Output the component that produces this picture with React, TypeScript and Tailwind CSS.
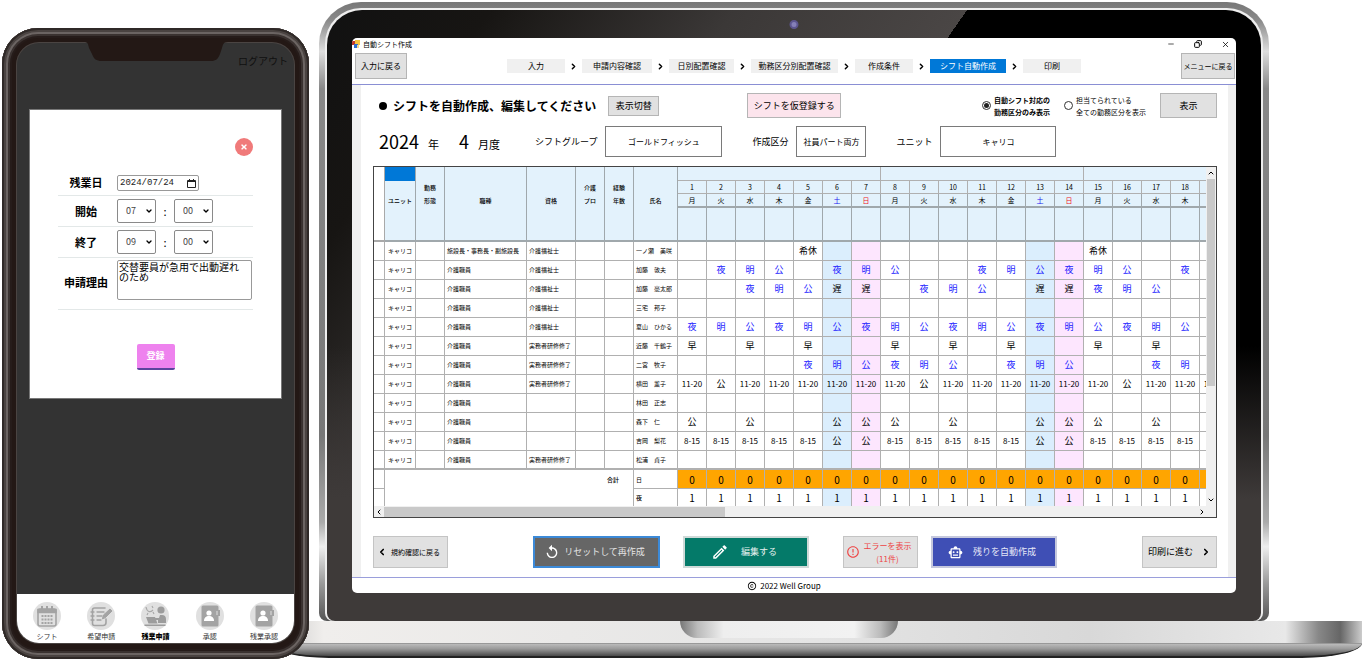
import type { ReactNode } from 'react'
import clsx from 'clsx'
import { ChevronDown, ChevronLeft, ChevronRight, ChevronUp, Copy, Minus, X } from 'lucide-react'
import { FaTimes } from 'react-icons/fa'
import { MdCopyright, MdErrorOutline, MdOutlineEdit, MdOutlineSmartToy, MdReplay } from 'react-icons/md'

interface Staff {
  name: string
  job: string
  license: string
  shifts: string
  blue?: boolean
}

const STEPS = [
  { label: '入力', width: 'w-[58px]' },
  { label: '申請内容確認', width: 'w-[70px]' },
  { label: '日別配置確認', width: 'w-[65px]' },
  { label: '勤務区分別配置確認', width: 'w-[87px]' },
  { label: '作成条件', width: 'w-[58px]' },
  { label: 'シフト自動作成', width: 'w-[76px]', active: true },
  { label: '印刷', width: 'w-[58px]' },
]

const COLUMNS = [
  { lines: ['', 'ユニット'], width: 'w-[31px]' },
  { lines: ['勤務', '形態'], width: 'w-[29px]' },
  { lines: ['', '職種'], width: 'w-[82px]' },
  { lines: ['', '資格'], width: 'w-[49px]' },
  { lines: ['介護', 'プロ'], width: 'w-[29px]' },
  { lines: ['経験', '年数'], width: 'w-[29px]' },
  { lines: ['', '氏名'], width: 'w-[44px]' },
]

// The last column is only partly scrolled into view
const LAST_DAY = 19
const DAYS = Array.from({ length: LAST_DAY }, (_, i) => i + 1)
const WEEK = ['日', '月', '火', '水', '木', '金', '土']

// One comma separated entry per day, starting on the 1st
const STAFF: Staff[] = [
  { name: '一ノ瀬　美咲', job: '施設長・事務長・副施設長', license: '介護福祉士', shifts: ',,,,希休,,,,,,,,,,希休,,,,' },
  { name: '加藤　敦夫', job: '介護職員', license: '介護福祉士', shifts: ',夜,明,公,,夜,明,公,,,夜,明,公,夜,明,公,,夜,', blue: true },
  { name: '加藤　豪太郎', job: '介護職員', license: '介護福祉士', shifts: ',,夜,明,公,遅,遅,,夜,明,公,,遅,遅,夜,明,公,,', blue: true },
  { name: '三宅　邦子', job: '介護職員', license: '介護福祉士', shifts: '' },
  { name: '夏山　ひかる', job: '介護職員', license: '介護福祉士', shifts: '夜,明,公,夜,明,公,夜,明,公,夜,明,公,夜,明,公,夜,明,公,', blue: true },
  { name: '近藤　千鶴子', job: '介護職員', license: '実務者研修修了', shifts: '早,,早,,早,,,早,,早,,早,,,早,,早,,' },
  { name: '二宮　牧子', job: '介護職員', license: '実務者研修修了', shifts: ',,,,夜,明,公,夜,明,公,,夜,明,公,,,夜,明,', blue: true },
  { name: '横田　薫子', job: '介護職員', license: '実務者研修修了', shifts: '11-20,公,11-20,11-20,11-20,11-20,11-20,11-20,公,11-20,11-20,11-20,11-20,11-20,11-20,公,11-20,11-20,11-20' },
  { name: '林田　正志', job: '介護職員', license: '', shifts: '' },
  { name: '森下　仁', job: '介護職員', license: '', shifts: '公,,公,,,公,公,公,,公,,,公,公,公,,公,,' },
  { name: '吉岡　梨花', job: '介護職員', license: '', shifts: '8-15,8-15,8-15,8-15,8-15,公,公,8-15,8-15,8-15,8-15,8-15,公,公,8-15,8-15,8-15,8-15,8-15' },
  { name: '松浦　貞子', job: '介護職員', license: '実務者研修修了', shifts: '' },
]

const dayColor = (day: number) => {
  if (day % 7 === 6) return 'bg-[#dbeefd]'
  if (day % 7 === 0) return 'bg-[#fde6fe]'
  return 'bg-white'
}

const CELL = 'border-r border-b border-[#b0b0b0] p-0 font-normal whitespace-nowrap overflow-hidden'

/* ---------- phone ---------- */

const CalendarIcon = () => (
  <svg viewBox="0 0 28 28" className="size-7" fill="none" stroke="#a3a3a3" strokeWidth="1.6">
    <circle cx="14" cy="14" r="14" fill="#e0e0e0" stroke="none" />
    <rect x="5" y="7" width="18" height="17" rx="2" />
    <path d="M5 7.500h18v3H5z" fill="#a3a3a3" />
    <path d="M9 4v4M14 4v4M19 4v4" strokeWidth="2" />
    <path d="M8.500 14h11M8.500 17.500h11M8.500 21h11" strokeDasharray="2 1" strokeWidth="2" />
  </svg>
)

const NoteIcon = () => (
  <svg viewBox="0 0 28 28" className="size-7" fill="none" stroke="#a3a3a3" strokeWidth="1.6" strokeLinecap="round">
    <circle cx="14" cy="14" r="14" fill="#e0e0e0" stroke="none" />
    <path d="M18 6H7.500A2 2 0 0 0 5.500 8v13.500a2 2 0 0 0 2 2H16a3 3 0 0 0 3-3V17" />
    <path d="M4 10h3M4 14h3M4 18h3M10 10h7M10 14h5M10 18h4" strokeWidth="1.3" />
    <path d="m15.500 16.500 1-3.500 6.500-6 2 2-6.500 6.500z" fill="#a3a3a3" strokeWidth="1" />
  </svg>
)

const OvertimeIcon = () => (
  <svg viewBox="0 0 28 28" className="size-7" fill="#9c9c9c">
    <circle cx="14" cy="14" r="14" fill="#e0e0e0" />
    <circle cx="20" cy="8" r="3.600" />
    <path d="M17 21v-3h-4v-2h5l1-3h2c2.500 0 4 1.500 4 4v4zM5 15h9l2.500 6.500H7.500zM3.500 22.500h21V24h-21z" />
    <path d="M5 5c1 5 4 6 7 3M11 4l1 2M7 11l-1 2M12 10l1 2" fill="none" stroke="#a9a9a9" strokeWidth="1.200" />
  </svg>
)

const ContactIcon = () => (
  <svg viewBox="0 0 28 28" className="size-7" fill="#a3a3a3">
    <circle cx="14" cy="14" r="14" fill="#e0e0e0" />
    <rect x="5.500" y="3.500" width="17" height="21" rx="1.500" />
    <path d="M22 8h2v6h-2z" />
    <path d="M21 9v4" stroke="#e0e0e0" strokeWidth="1" />
    <circle cx="13" cy="11" r="2.600" fill="#fff" />
    <path d="M8 19c0-3.500 2-5 5-5s5 1.500 5 5z" fill="#fff" />
  </svg>
)

const TABS = [
  { label: 'シフト', icon: <CalendarIcon /> },
  { label: '希望申請', icon: <NoteIcon /> },
  { label: '残業申請', icon: <OvertimeIcon />, active: true },
  { label: '承認', icon: <ContactIcon /> },
  { label: '残業承認', icon: <ContactIcon /> },
]

const TimeSelect = ({ id, value, label }: { id: string; value: string; label: string }) => (
  <div className="relative">
    <select
      id={id}
      aria-label={label}
      defaultValue={value}
      className="block h-6 w-[39px] appearance-none rounded-xs border border-[#8a8a8a] bg-white pl-[8px] text-[9px] text-[#444]"
    >
      <option>{value}</option>
    </select>
    <ChevronDown className="pointer-events-none absolute top-2 right-[3px] size-2 text-black" strokeWidth={4} />
  </div>
)

const TimeRow = ({ id, title, hour, minute }: { id: string; title: string; hour: string; minute: string }) => (
  <div className="flex h-[31px] items-center border-b border-[#e3e8e8]">
    <label htmlFor={id} className="mr-[3px] w-14 text-center text-[11px] font-bold">{title}</label>
    <TimeSelect id={id} value={hour} label={`${title} 時`} />
    <span className="w-[18px] text-center text-[11px]">:</span>
    <TimeSelect id={`${id}-minute`} value={minute} label={`${title} 分`} />
  </div>
)

const Phone = () => (
  <div className="relative z-10 mt-7 ml-[2px] w-[307px] shrink-0 rounded-[36px] bg-[#231815] pt-[15px] pr-[15px] pb-4 pl-[15px] shadow-[inset_0_0_0_2px_#2f2927,inset_0_0_0_4px_#4a4341,inset_0_0_0_6px_#6b6462,inset_0_0_0_8px_#3a3230,inset_0_0_0_10px_#261c1a]">
    <div className="overflow-hidden rounded-[22px] bg-[#333] ring-1 ring-[#4a4442]">
      {/* Notch */}
      <svg viewBox="0 0 144 19" className="absolute top-[14px] left-[82px] h-[19px] w-36" fill="#231815">
        <path d="M0 0h144c-5 0-5 3-6 6l-2 6c-2 5-4 7-9 7H18c-6 0-8-2-10-7L5 6C4 2 4 0 0 0z" />
      </svg>
      <div className="flex h-[66px] justify-end pt-[11px] pr-[6px]">
        <a href="#logout" className="h-fit text-[10px] leading-[14px] text-[#101010]">ログアウト</a>
      </div>

      {/* Overtime form */}
      <form className="mx-3 mb-[195px] flex h-[290px] flex-col border border-[#777] bg-white px-7 pt-7">
        <button type="button" aria-label="閉じる" className="flex size-[18px] items-center justify-center self-end rounded-full bg-[#f07a7a] text-white">
          <FaTimes className="size-2" />
        </button>
        <div className="mt-[14px] flex h-[26px] items-center border-b border-[#e3e8e8]">
          <label htmlFor="date" className="mr-[3px] w-14 text-center text-[11px] font-bold">残業日</label>
          <div className="relative">
            <input
              id="date"
              type="text"
              defaultValue="2024/07/24"
              className="block h-4 w-[82px] rounded-xs border border-[#999] pl-[2px] font-['Liberation_Mono',monospace] text-[9px] text-[#222]"
            />
            <svg viewBox="0 0 9 9" className="absolute top-1 right-[3px] size-[9px]" fill="none" stroke="#222">
              <path d="M.5 1.500h8v7h-8zM.5 2.500h8M2.500 0v2M6.500 0v2" />
            </svg>
          </div>
        </div>
        <TimeRow id="start" title="開始" hour="07" minute="00" />
        <TimeRow id="end" title="終了" hour="09" minute="00" />
        <div className="flex h-[52px] items-start border-b border-[#e3e8e8] pt-[2px]">
          <label htmlFor="reason" className="mr-[3px] w-14 text-center text-[11px] leading-[44px] font-bold">申請理由</label>
          <textarea
            id="reason"
            defaultValue="交替要員が急用で出動遅れのため"
            className="block h-10 w-[135px] resize-none overflow-hidden rounded-xs border border-[#999] py-px pr-[10px] pl-px text-[10px] leading-[10px]"
          />
        </div>
        <button type="submit" className="mt-[34px] h-[26px] w-[38px] self-center rounded-xs border-b-2 border-[#5a459c] bg-[#ee82ee] text-[9px] font-bold text-white">
          登録
        </button>
      </form>

      <nav className="grid h-[49px] grid-cols-5 bg-white px-[3px] pt-2">
        {TABS.map((tab) => (
          <a
            key={tab.label}
            href="#tab"
            className={clsx(
              'flex flex-col items-center text-[7px] leading-[13px]',
              tab.active ? 'font-black text-black' : 'text-[#333]',
            )}
          >
            {tab.icon}
            {tab.label}
          </a>
        ))}
      </nav>
    </div>
  </div>
)

/* ---------- laptop ---------- */

const Field = ({ id, label, value, width }: { id: string; label: string; value: string; width: string }) => (
  <div className="flex items-center gap-2">
    <label htmlFor={id} className="text-[9px]">{label}</label>
    <input
      id={id}
      readOnly
      value={value}
      className={clsx('h-[31px] border border-[#7a7a7a] bg-white text-center text-[8px]', width)}
    />
  </div>
)

const Choice = ({ lines, bold }: { lines: string[]; bold?: boolean }) => (
  <label className={clsx('flex items-center gap-[3px] text-[7px] leading-3', bold && 'font-bold')}>
    <input
      type="radio"
      name="scope"
      defaultChecked={bold}
      className="size-[9px] appearance-none rounded-full border border-[#333] bg-white p-px checked:bg-[#222] checked:bg-clip-content"
    />
    <span className="whitespace-nowrap">
      {lines[0]}
      <br />
      {lines[1]}
    </span>
  </label>
)

const ActionButton = ({ className, children }: { className: string; children: ReactNode }) => (
  <button className={clsx('flex h-8 shrink-0 items-center justify-center whitespace-nowrap', className)}>
    {children}
  </button>
)

const ShiftTable = () => (
  <table className="w-[855px] table-fixed border-separate border-spacing-0 text-[6px] leading-[13px]">
    <colgroup>
      <col className="w-[11px]" />
      {COLUMNS.map((c) => <col key={c.lines[1]} className={c.width} />)}
      {DAYS.map((d) => <col key={d} className="w-[29px]" />)}
    </colgroup>
    <thead className="bg-[#e3f2fc]">
      <tr className="h-[14px]">
        <td rowSpan={4} className="border-r border-b-2 border-[#a9a9a9] bg-white p-0" />
        {COLUMNS.map((c, i) => (
          <th key={c.lines[1]} rowSpan={4} className="border-r border-b-2 border-[#a0a8ac] p-0 align-top font-medium">
            <div className={clsx('h-[14px]', i === 0 && 'bg-[#0078d7]')} />
            <div className="h-[13px]">{c.lines[0]}</div>
            <div className="h-[13px]">{c.lines[1]}</div>
          </th>
        ))}
        <td colSpan={7} className={CELL} />
        <td colSpan={7} className={CELL} />
        <td colSpan={5} className={CELL} />
      </tr>
      <tr className="h-[13px] text-[7px]">
        {DAYS.map((d) => <th key={d} className={clsx(CELL, 'leading-3')}>{d < LAST_DAY && d}</th>)}
      </tr>
      <tr className="h-[14px] text-[7px]">
        {DAYS.map((d) => (
          <th
            key={d}
            className={clsx(
              'border-r border-b-2 border-[#a0a8ac] p-0 leading-3 font-normal',
              d % 7 === 6 && 'text-[#1515f0]',
              d % 7 === 0 && 'text-[#f01515]',
            )}
          >
            {d < LAST_DAY && WEEK[d % 7]}
          </th>
        ))}
      </tr>
      <tr className="h-[34px]">
        {DAYS.map((d) => <td key={d} className="border-r border-b-2 border-[#a0a8ac] p-0" />)}
      </tr>
    </thead>
    <tbody>
      {STAFF.map((s, row) => {
        const shifts = s.shifts.split(',')
        const cell = clsx(CELL, 'pb-px', row === STAFF.length - 1 && 'border-b-2')
        return (
          <tr key={s.name} className="h-[19px]">
            <td className={cell} />
            <td className={clsx(cell, 'text-center font-medium')}>キャリコ</td>
            <td className={cell} />
            <td className={clsx(cell, 'pl-[2px] font-medium')}>{s.job}</td>
            <td className={clsx(cell, 'pl-[2px] font-medium')}>{s.license}</td>
            <td className={cell} />
            <td className={cell} />
            <td className={clsx(cell, 'pl-[2px] font-medium')}>{s.name}</td>
            {DAYS.map((d, i) => {
              const shift = shifts[i] ?? ''
              return (
                <td
                  key={d}
                  className={clsx(
                    cell,
                    dayColor(d),
                    'text-center',
                    shift.includes('-') ? 'text-[8px]' : 'text-[9px]',
                    s.blue && shift !== '遅' && 'text-[#1a1aff]',
                  )}
                >
                  {shift}
                </td>
              )
            })}
          </tr>
        )
      })}
      <tr className="h-[19px]">
        <td className={CELL} />
        <td colSpan={6} rowSpan={2} className="border-r border-[#b0b0b0] p-0 pt-[3px] pr-[14px] text-right align-top font-medium">
          合計
        </td>
        <td className={clsx(CELL, 'pl-[2px] font-medium')}>日</td>
        {DAYS.map((d) => (
          <td key={d} className={clsx(CELL, 'bg-[#ffa500] text-center text-[10px]')}>{d < LAST_DAY && 0}</td>
        ))}
      </tr>
      <tr className="h-[17px]">
        <td className="border-r border-[#b0b0b0] p-0" />
        <td className="border-r border-[#b0b0b0] p-0 pl-[2px] font-medium">夜</td>
        {DAYS.map((d) => (
          <td key={d} className={clsx('border-r border-[#b0b0b0] p-0 text-center text-[10px]', dayColor(d))}>
            {d < LAST_DAY && 1}
          </td>
        ))}
      </tr>
    </tbody>
  </table>
)

const ShiftApp = () => (
  <div className="overflow-hidden rounded-[5px] bg-white text-black">
    {/* Title bar */}
    <div className="flex h-3 items-center justify-between pr-[6px]">
      <div className="flex items-center gap-[3px] text-[7px] leading-3">
        <svg viewBox="0 0 8 9" className="h-[9px] w-2">
          <path d="M0 1h4v4H0z" fill="#c0392b" />
          <path d="M3 0h5v5H3z" fill="#f5c542" />
          <path d="M2 4h4v4H2z" fill="#2f6fd0" />
          <path d="M5 5h2v3H5z" fill="#f0d890" />
        </svg>
        自動シフト作成
      </div>
      <div className="flex items-center gap-[19px]">
        <Minus className="size-2" />
        <Copy className="size-2 -scale-x-100" strokeWidth={3} />
        <X className="size-[9px]" strokeWidth={2} />
      </div>
    </div>

    {/* Step navigation */}
    <div className="flex h-[35px] items-center justify-between border-b border-[#8a8fd4] pr-px pb-[2px] pl-[3px]">
      <button className="h-[26px] w-[52px] border border-[#b5b5b5] bg-[#e1e1e1] text-[8px]">入力に戻る</button>
      <ol className="flex items-center">
        {STEPS.map((step, i) => (
          <li key={step.label} className="flex items-center">
            {i > 0 && <ChevronRight className="mx-1 size-[9px]" strokeWidth={4} />}
            <span
              className={clsx(
                'h-[14px] text-center text-[8px] leading-[14px] whitespace-nowrap',
                step.width,
                step.active ? 'bg-[#0078d7] text-white' : 'bg-[#f0f0f0]',
              )}
            >
              {step.label}
            </span>
          </li>
        ))}
      </ol>
      <button className="h-[26px] w-[54px] border border-[#b5b5b5] bg-[#e1e1e1] text-[7px]">メニューに戻る</button>
    </div>

    <main className="border-r-8 border-l-[9px] border-[#f0f0f0] pt-2 pr-[11px] pb-[9px] pl-3">
      <div className="flex h-[25px] items-center pl-[6px]">
        <h1 className="flex items-center gap-[6px] text-[12px] font-bold whitespace-nowrap">
          <span className="size-2 rounded-full bg-black" />
          シフトを自動作成、編集してください
        </h1>
        <button className="ml-3 h-5 w-[51px] border border-[#b5b5b5] bg-[#e1e1e1] text-[9px]">表示切替</button>
        <button className="ml-[88px] h-[25px] w-[94px] border border-[#b5b5b5] bg-[#fce4ec] text-[9px]">シフトを仮登録する</button>
        <div className="ml-auto flex items-center gap-[14px]">
          <Choice lines={['自動シフト対応の', '勤務区分のみ表示']} bold />
          <Choice lines={['担当てられている', '全ての勤務区分を表示']} />
          <button className="h-[25px] w-[57px] border border-[#b5b5b5] bg-[#e1e1e1] text-[9px]">表示</button>
        </div>
      </div>

      <div className="mt-2 flex h-[31px] items-center pl-[6px]">
        <p className="mr-[35px] flex items-baseline text-[11px] whitespace-nowrap">
          <span className="mr-[9px] text-[18px]">2024</span>
          年
          <span className="mr-[9px] ml-5 text-[18px]">4</span>
          月度
        </p>
        <div className="flex gap-[30px]">
          <Field id="group" label="シフトグループ" value="ゴールドフィッシュ" width="w-[117px]" />
          <Field id="kind" label="作成区分" value="社員パート両方" width="w-[70px]" />
          <Field id="unit" label="ユニット" value="キャリコ" width="w-[116px]" />
        </div>
      </div>

      {/* Shift grid */}
      <div className="mt-[9px] border border-[#444]">
        <div className="flex h-[339px]">
          <div className="min-w-0 flex-1 overflow-hidden">
            <ShiftTable />
          </div>
          <div className="flex w-[10px] flex-col items-center bg-[#f0f0f0]">
            <ChevronUp className="my-[2px] size-2" strokeWidth={3} />
            <div className="h-[207px] w-2 bg-[#c9c9c9]" />
            <ChevronDown className="mt-auto mb-[2px] size-2" strokeWidth={3} />
          </div>
        </div>
        <div className="flex h-[11px] items-center bg-[#f0f0f0] pr-[10px]">
          <ChevronLeft className="mx-px size-2" strokeWidth={3} />
          <div className="h-[10px] w-[341px] bg-[#c9c9c9]" />
          <ChevronRight className="ml-auto size-2" strokeWidth={3} />
        </div>
      </div>

      <div className="mt-[18px] flex">
        <ActionButton className="w-[75px] gap-1 border border-[#c4c4c4] bg-[#e1e1e1] pr-1 text-[7px]">
          <ChevronLeft className="size-[10px]" strokeWidth={4} />
          規約確認に戻る
        </ActionButton>
        <ActionButton className="ml-[85px] w-[127px] gap-1 border-2 border-[#3c8ad8] bg-[#666] pr-1 text-[9px] text-[#e4e4e4]">
          <MdReplay className="size-4 text-white" />
          リセットして再作成
        </ActionButton>
        <ActionButton className="ml-[23px] w-[126px] gap-3 border-2 border-[#cfdad8] bg-[#047a69] pr-1 text-[9px] text-[#e4f0ee]">
          <MdOutlineEdit className="size-[18px] text-white" />
          編集する
        </ActionButton>
        <ActionButton className="ml-[34px] w-[75px] gap-1 border border-[#c4c4c4] bg-[#e1e1e1] pr-1 text-[8px] leading-[13px] text-[#ee4444]">
          <MdErrorOutline className="size-[14px]" />
          <span>
            エラーを表示
            <br />
            (11件)
          </span>
        </ActionButton>
        <ActionButton className="ml-[13px] w-[126px] gap-[10px] border-2 border-[#c5c8dd] bg-[#3f4fb5] pr-1 text-[9px] text-[#e6e8f8]">
          <MdOutlineSmartToy className="size-[15px] text-white" />
          残りを自動作成
        </ActionButton>
        <ActionButton className="ml-auto w-[75px] gap-2 border border-[#c4c4c4] bg-[#e1e1e1] text-[9px]">
          印刷に進む
          <ChevronRight className="size-[10px]" strokeWidth={4} />
        </ActionButton>
      </div>
    </main>

    <footer className="flex h-4 items-center justify-center gap-[3px] border-t border-[#9a9edb] pr-5 text-[8px] leading-[15px]">
      <MdCopyright className="size-[10px]" />
      2022 Well Group
    </footer>
  </div>
)

const Laptop = () => (
  <div className="mt-[2px] min-w-0 flex-1">
    {/* Lid */}
    <div className="mr-[93px] ml-[10px] rounded-t-[42px] rounded-b-[8px] bg-[linear-gradient(180deg,#777_0%,#8a8a8a_3%,#ddd_8%,#888_14%,#777_70%,#aaa_84%,#eee_88%,#999_94%,#555_100%)] px-[6px] pt-[6px]">
      <div className="rounded-t-[36px] rounded-b-[8px] bg-[#eee] px-[2px] pt-[2px]">
        <div className="relative rounded-t-[35px] rounded-b-[8px] bg-[linear-gradient(180deg,transparent_55%,#3e3a39_80%),linear-gradient(125deg,#111_0%,#171513_12%,#3b3837_30%,#4a4645_47%,#000_47%)] px-[25px] py-7">
          <span className="absolute top-[10px] left-1/2 size-[9px] -translate-x-1/2 rounded-full border-2 border-[#5d5690] bg-[#8580b8]" />
          <ShiftApp />
        </div>
      </div>
    </div>

    {/* Base */}
    <div className="-ml-[40px]">
      <div className="flex h-[22px] justify-center bg-[linear-gradient(90deg,#c4c4c4_0%,#f0eeec_5%,#e4e4e4_50%,#d8d8d8_75%,#e8e8e8_93%,#888_96%,#666_98%,#ccc_100%)] pr-[54px]">
        <div className="h-[17px] w-[218px] rounded-b-[18px] bg-[linear-gradient(90deg,#777_0%,#bbb_8%,#eee_20%,#f2f2f2_80%,#bbb_92%,#777_100%)]" />
      </div>
      <div className="h-[15px] rounded-br-[60px_15px] rounded-bl-[60px_15px] border-t border-b-2 border-t-[#999] border-b-[#222] bg-[linear-gradient(180deg,#bbb,#9a9a9a_40%,#4a4a4a)]" />
    </div>
  </div>
)

export default function App() {
  return (
    <div lang="ja" className="flex min-h-screen w-full items-start overflow-hidden bg-white font-['Noto_Sans_CJK_JP',sans-serif]">
      <Phone />
      <Laptop />
    </div>
  )
}
